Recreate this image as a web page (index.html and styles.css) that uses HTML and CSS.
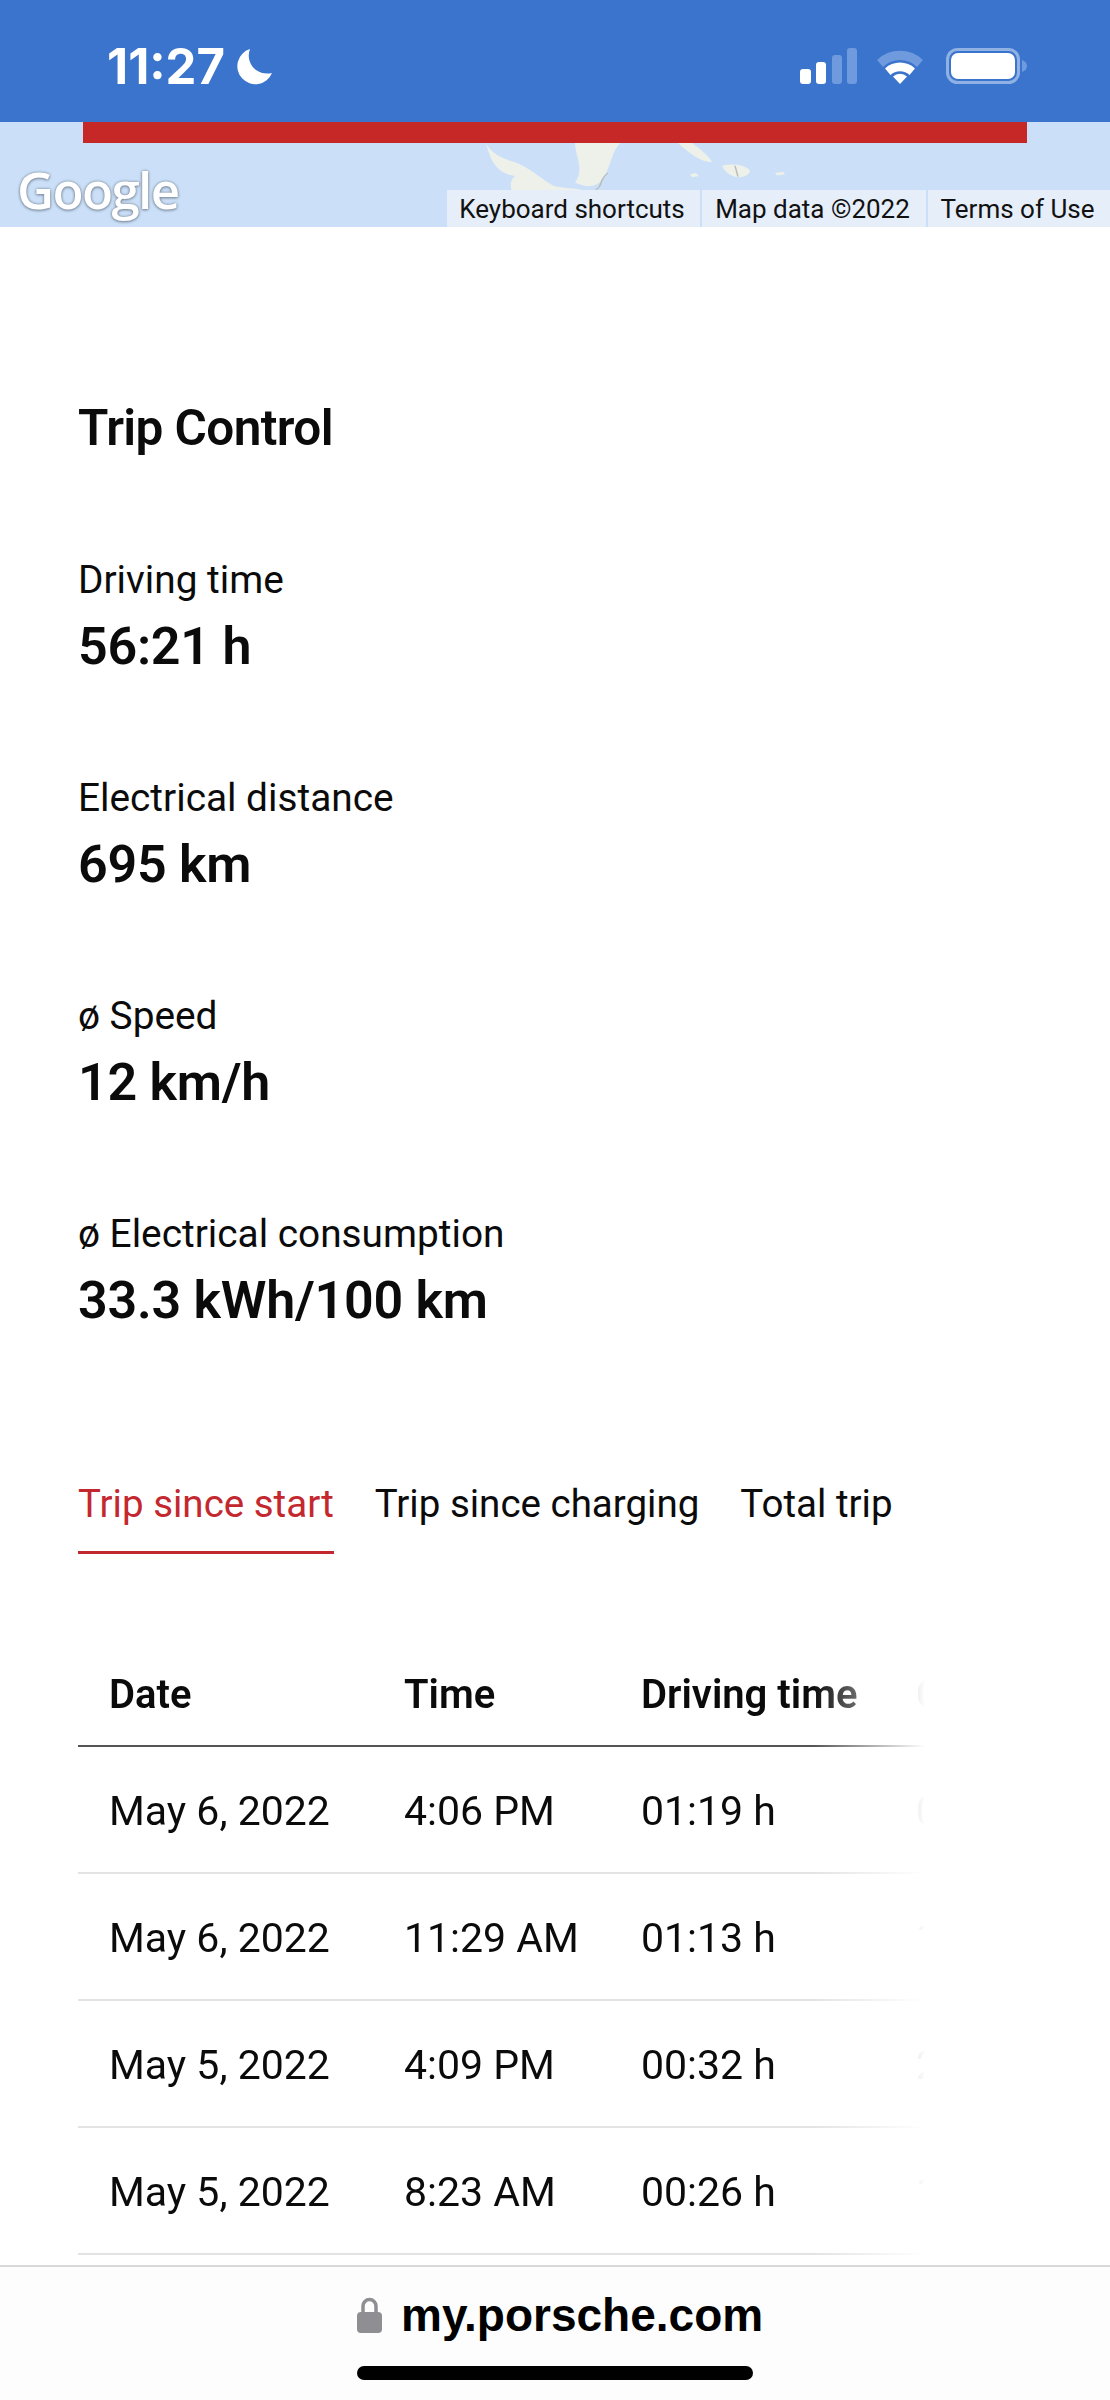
FILE: index.html
```html
<!DOCTYPE html>
<html lang="en">
<head>
    <meta charset="UTF-8">
    <meta name="viewport" content="width=device-width, initial-scale=1.0">
    <title>Trip Control</title>
    <link rel="stylesheet" href="styles.css">
</head>
<body>
    <header class="status-bar">
        <div class="status-left">
            <span class="clock">11:27</span>
            <svg class="moon" viewBox="0 0 36 36"><path d="M14 0 A18 18 0 1 0 36 24 A20 20 0 0 1 20 21 A18 18 0 0 1 14 0 Z" fill="#fff"/></svg>
        </div>
        <div class="status-right">
            <svg class="signal" viewBox="0 0 57 36">
                <rect x="0" y="21" width="11" height="15" rx="3" fill="#fff"/>
                <rect x="16" y="14" width="10" height="22" rx="3" fill="#fff"/>
                <rect x="32" y="7" width="10" height="29" rx="3" fill="#6f9ade"/>
                <rect x="47" y="0" width="10" height="36" rx="3" fill="#6f9ade"/>
            </svg>
            <svg class="wifi" viewBox="0 0 50 36">
                <path d="M2 12 A33 33 0 0 1 48 12 L42 19 A24 24 0 0 0 8 19 Z" fill="#6f9ade"/>
                <path d="M10 20.500 A22 22 0 0 1 40 20.500 L34.500 27 A14 14 0 0 0 15.500 27 Z" fill="#fff"/>
                <path d="M18 28.500 A10 10 0 0 1 32 28.500 L25 36 Z" fill="#fff"/>
            </svg>
            <svg class="battery" viewBox="0 0 81 36">
                <rect x="1.500" y="1.500" width="71" height="33" rx="10" fill="none" stroke="#8fb1e4" stroke-width="3"/>
                <rect x="5" y="5" width="64" height="26" rx="7" fill="#fff"/>
                <path d="M76 12 C79 13 81 15 81 18 C81 21 79 23 76 24 Z" fill="#6f9ade"/>
            </svg>
        </div>
    </header>

    <section class="map">
        <div class="progress"></div>
        <svg class="land" viewBox="0 0 1110 140" preserveAspectRatio="none">
            <path d="M486 0 C490 15 500 25 515 32 C530 42 538 55 550 68 C560 80 580 70 588 85 L640 130 L522 130 C515 85 505 70 515 55 C495 50 490 25 486 0 Z" fill="#eef1ea"/>
            <path d="M575 0 L620 0 C612 15 612 30 606 50 C600 72 590 78 575 66 C585 45 575 20 575 0 Z" fill="#eef1ea"/>
            <path d="M678 0 L692 0 C700 10 708 20 712 32 C700 32 688 15 678 0 Z" fill="#eef1ea"/>
            <path d="M722 38 C735 32 750 40 750 48 C745 62 728 60 722 38 Z" fill="#eef1ea"/>
            <path d="M690 52 l6 -2 l3 5 l-7 2 Z M775 50 l8 -2 l2 4 l-8 2 Z" fill="#eef1ea"/>
            <path d="M608 50 C598 62 604 70 596 78 L604 96" fill="none" stroke="#b9bdb6" stroke-width="1.500"/>
            <path d="M735 38 L738 56" fill="none" stroke="#b9bdb6" stroke-width="1.500"/>
        </svg>
        <span class="map-logo">Google</span>
        <div class="map-links">
            <span class="map-link map-link-first">Keyboard shortcuts</span>
            <span class="map-link map-link-second">Map data ©2022</span>
            <span class="map-link map-link-third">Terms of Use</span>
        </div>
    </section>

    <main class="content">
        <h1 class="title">Trip Control</h1>

        <div class="stat">
            <div class="stat-label">Driving time</div>
            <div class="stat-value">56:21 h</div>
        </div>
        <div class="stat">
            <div class="stat-label">Electrical distance</div>
            <div class="stat-value">695 km</div>
        </div>
        <div class="stat">
            <div class="stat-label">ø Speed</div>
            <div class="stat-value">12 km/h</div>
        </div>
        <div class="stat">
            <div class="stat-label">ø Electrical consumption</div>
            <div class="stat-value">33.3 kWh/100 km</div>
        </div>

        <nav class="tabs">
            <a class="tab tab-active">Trip since start</a>
            <a class="tab">Trip since charging</a>
            <a class="tab">Total trip</a>
        </nav>

        <div class="table-wrap">
            <table class="trip-table">
                <thead>
                    <tr><th class="col-date">Date</th><th class="col-time">Time</th><th class="col-driving">Driving time</th><th class="col-more">C</th></tr>
                </thead>
                <tbody>
                    <tr><td>May 6, 2022</td><td>4:06 PM</td><td>01:19 h</td><td>0</td></tr>
                    <tr><td>May 6, 2022</td><td>11:29 AM</td><td>01:13 h</td><td>1</td></tr>
                    <tr><td>May 5, 2022</td><td>4:09 PM</td><td>00:32 h</td><td>2</td></tr>
                    <tr><td>May 5, 2022</td><td>8:23 AM</td><td>00:26 h</td><td>1</td></tr>
                </tbody>
            </table>
        </div>
    </main>

    <footer class="url-bar">
        <div class="url-row">
            <svg class="lock" viewBox="0 0 25 36">
                <path d="M6 17 V9 A6.500 6.500 0 0 1 19 9 V17" fill="none" stroke="#8e8e93" stroke-width="3.500"/>
                <rect x="0" y="15" width="25" height="21" rx="4" fill="#8e8e93"/>
            </svg>
            <span class="url">my.porsche.com</span>
        </div>
        <div class="home-bar"></div>
    </footer>
</body>
</html>
```

FILE: styles.css
```css
* {
    box-sizing: border-box;
}

html, body {
    margin: 0;
    padding: 0;
}

body {
    width: 1110px;
    height: 2400px;
    overflow: hidden;
    display: flex;
    flex-direction: column;
    background-color: #fff;
    color: #0b0b0b;
    font-family: Roboto, "Liberation Sans", sans-serif;
}

.status-bar {
    flex: none;
    height: 122px;
    background-color: #3b74cc;
    display: flex;
    justify-content: space-between;
    align-items: flex-start;
    padding: 48px 83px 0 107px;
}

.status-left {
    display: flex;
    align-items: center;
    gap: 11px;
}

.clock {
    color: #fff;
    font-family: Inter, sans-serif;
    font-weight: 700;
    font-size: 49px;
    line-height: 37px;
}

.moon {
    width: 36px;
    height: 36px;
}

.status-right {
    display: flex;
    align-items: center;
}

.signal {
    width: 57px;
    height: 36px;
    margin-right: 18px;
}

.wifi {
    width: 50px;
    height: 36px;
    margin-right: 21px;
}

.battery {
    width: 81px;
    height: 36px;
}

.map {
    flex: none;
    position: relative;
    height: 105px;
    background-color: #cbe0f8;
    overflow: hidden;
}

.progress {
    height: 21px;
    margin: 0 83px;
    background-color: #c62828;
    position: relative;
    z-index: 1;
}

.land {
    position: absolute;
    left: 0;
    top: 21px;
    width: 1110px;
    height: 84px;
}

.map-logo {
    position: absolute;
    left: 17px;
    top: 37px;
    color: #fff;
    font-family: "Open Sans", sans-serif;
    font-size: 51px;
    font-weight: 600;
    line-height: 60px;
    letter-spacing: -1.6px;
    text-shadow: 0 0 3px #7d8b9c, 0 1px 3px #7d8b9c;
}

.map-links {
    position: absolute;
    right: 0;
    bottom: 0;
    display: flex;
    height: 37px;
}

.map-link {
    background-color: #e6eef9;
    color: #111;
    font-family: Roboto, sans-serif;
    font-size: 26px;
    line-height: 39px;
    text-align: center;
    white-space: nowrap;
    padding-right: 3px;
}

.map-link-first {
    width: 253px;
}

.map-link-second {
    width: 224px;
    margin-left: 2px;
}

.map-link-third {
    width: 182px;
    margin-left: 2px;
}

.content {
    flex: 1;
    overflow: hidden;
    padding: 172px 0 0 78px;
}

.title {
    margin: 0 0 100px;
    font-size: 49.500px;
    line-height: 58px;
    font-weight: 600;
    letter-spacing: -0.6px;
}

.stat {
    height: 218px;
}

.stat-label {
    font-size: 38.800px;
    line-height: 46px;
    font-weight: 400;
}

.stat-value {
    margin-top: 13px;
    font-size: 52px;
    line-height: 62px;
    font-weight: 600;
    letter-spacing: -0.25px;
}

.tabs {
    display: flex;
    gap: 41px;
    margin-top: 51px;
}

.tab {
    font-size: 38.500px;
    line-height: 48px;
    padding-bottom: 23px;
    color: #0b0b0b;
}

.tab-active {
    color: #c4282f;
    border-bottom: 3px solid #c4282f;
}

.table-wrap {
    width: 880px;
    margin-top: 88px;
    -webkit-mask-image: linear-gradient(to right, #000 735px, transparent 847px);
    mask-image: linear-gradient(to right, #000 735px, transparent 847px);
}

.trip-table {
    table-layout: fixed;
    width: 880px;
    border-collapse: collapse;
}

.trip-table th,
.trip-table td {
    padding: 0;
    text-align: left;
    white-space: nowrap;
}

.trip-table th {
    height: 104px;
    padding-top: 2px;
    font-size: 40px;
    font-weight: 600;
    border-bottom: 2px solid #555;
}

.trip-table td {
    height: 127px;
    padding-top: 2px;
    font-size: 41px;
    border-bottom: 2px solid #e3e3e3;
}

.trip-table th:first-child,
.trip-table td:first-child {
    padding-left: 31px;
}

.col-date {
    width: 326px;
}

.col-time {
    width: 237px;
}

.col-driving {
    width: 275px;
}

.url-bar {
    flex: none;
    height: 135px;
    background-color: #fdfdfd;
    border-top: 2px solid #d8d8d8;
    position: relative;
}

.url-row {
    display: flex;
    align-items: center;
    gap: 19px;
    padding: 24px 0 0 357px;
}

.lock {
    width: 25px;
    height: 36px;
}

.url {
    font-family: "Liberation Sans", sans-serif;
    font-size: 46px;
    font-weight: 700;
    line-height: 48px;
    color: #000;
}

.home-bar {
    position: absolute;
    left: 357px;
    top: 99px;
    width: 396px;
    height: 14px;
    border-radius: 7px;
    background-color: #000;
}
```
